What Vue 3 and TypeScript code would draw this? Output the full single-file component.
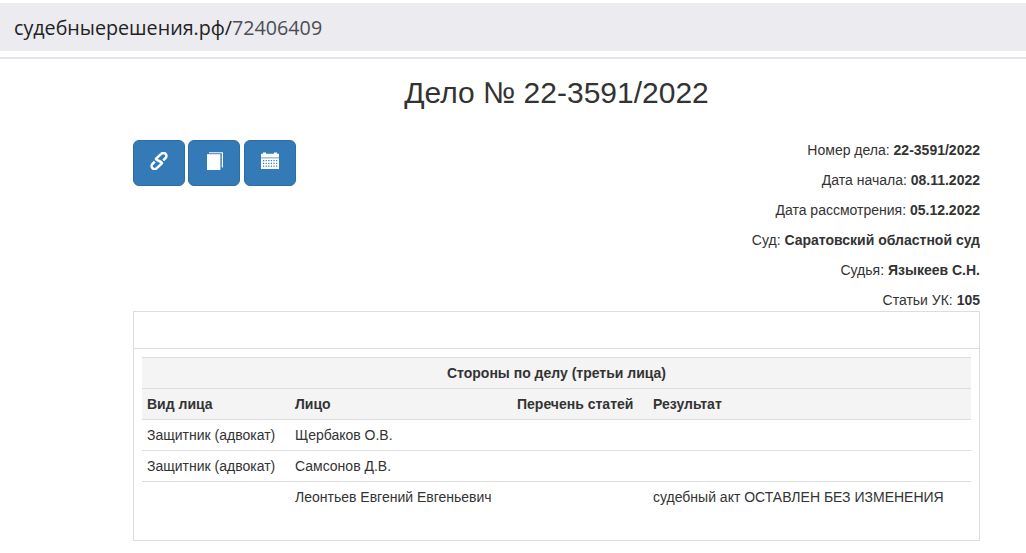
<script setup lang="ts">
const info: { label: string; value: string }[] = [
  { label: 'Номер дела:', value: '22-3591/2022' },
  { label: 'Дата начала:', value: '08.11.2022' },
  { label: 'Дата рассмотрения:', value: '05.12.2022' },
  { label: 'Суд:', value: 'Саратовский областной суд' },
  { label: 'Судья:', value: 'Языкеев С.Н.' },
  { label: 'Статьи УК:', value: '105' },
]
const rows: string[][] = [
  ['Защитник (адвокат)', 'Щербаков О.В.', '', ''],
  ['Защитник (адвокат)', 'Самсонов Д.В.', '', ''],
  ['', 'Леонтьев Евгений Евгеньевич', '', 'судебный акт ОСТАВЛЕН БЕЗ ИЗМЕНЕНИЯ'],
]
</script>

<template>
  <div class="page">
    <header class="address">
      <span class="domain">судебныерешения.рф/</span><span class="num">72406409</span>
    </header>
    <div class="rule"></div>
    <main class="container">
      <h1 class="title">Дело № 22-3591/2022</h1>
      <div class="top">
        <div class="buttons">
          <button class="btn" type="button" aria-label="Ссылка">
            <svg width="18" height="18" viewBox="0 0 18 18" fill="none" stroke="#fff" stroke-width="2.5" stroke-linecap="butt" stroke-linejoin="round">
              <path d="M13.2 8.4 15.6 6A3 3 0 0 0 11.2 1.9L6.1 6.6C4.8 8 13.2 10 11.9 11.4L6.8 16.1A3 3 0 0 1 2.4 12L4.8 9.6" />
            </svg>
          </button>
          <button class="btn" type="button" aria-label="Документы">
            <svg width="18" height="18" viewBox="0 0 18 18" fill="#fff">
              <path d="M2 2.2h13.4V18H2z" />
              <path d="M4 .3h14v15.2h-1.2V1.3H4z" />
            </svg>
          </button>
          <button class="btn" type="button" aria-label="Календарь">
            <svg width="18" height="18" viewBox="0 0 18 18">
              <path fill="#fff" d="M0 1.8h2V.6h3v1.2h8V.6h3v1.2h2v3.6H0zM0 6.2h18V17H0z" />
              <g fill="#337ab7">
                <rect v-for="c in 18" :key="c" :x="2 + ((c - 1) % 6) * 2.6" :y="8 + Math.floor((c - 1) / 6) * 2.8" width="1.2" height="1.2" />
              </g>
            </svg>
          </button>
        </div>
        <div class="info">
          <p v-for="item in info" :key="item.label">{{ item.label }} <b>{{ item.value }}</b></p>
        </div>
      </div>
      <section class="panel">
        <div class="panel-head"></div>
        <div class="panel-body">
          <table>
            <colgroup>
              <col class="c1" /><col class="c2" /><col class="c3" /><col />
            </colgroup>
            <thead>
              <tr><th colspan="4" class="center">Стороны по делу (третьи лица)</th></tr>
              <tr><th>Вид лица</th><th>Лицо</th><th>Перечень статей</th><th>Результат</th></tr>
            </thead>
            <tbody>
              <tr v-for="(r, i) in rows" :key="i">
                <td v-for="(c, j) in r" :key="j">{{ c }}</td>
              </tr>
            </tbody>
          </table>
        </div>
      </section>
    </main>
  </div>
</template>

<style>
html, body { margin: 0; background: #fff; }
</style>

<style scoped>
.page {
  font-family: "Liberation Sans", Arial, sans-serif;
  font-size: 14px;
  line-height: 20px;
  color: #333;
  padding-top: 3px;
  height: 550px;
  overflow: hidden;
}
.address {
  height: 48px;
  background: #ebebf0;
  padding-left: 14px;
  font-family: "Open Sans", sans-serif;
  font-size: 19.7px;
  line-height: 50px;
  color: #222;
}
.num { color: #4d4d55; }
.rule { height: 2px; margin-top: 6px; background: #e4e4e8; }
.container { width: 847px; margin-left: 133px; }
.title {
  margin: 15px 0 0;
  font-size: 30px;
  line-height: 38px;
  font-weight: 400;
  text-align: center;
}
.top { display: flex; justify-content: space-between; margin-top: 28px; }
.buttons { display: flex; align-items: flex-start; }
.btn {
  width: 52px;
  height: 46px;
  padding: 0 0 4px;
  display: flex;
  align-items: center;
  justify-content: center;
  background: #337ab7;
  border: 1px solid #2e6da4;
  border-radius: 6px;
}
.btn + .btn { margin-left: 3px; }
.btn:last-child { margin-left: 4px; }
.info { text-align: right; }
.info p { margin: 0 0 10px; }
.info p:last-child { margin-bottom: 1px; }
.info b { font-weight: 700; }
.panel { border: 1px solid #ddd; box-sizing: border-box; height: 230px; }
.panel-head { height: 36px; border-bottom: 1px solid #ddd; }
.panel-body { padding: 8px; }
table { width: 100%; border-collapse: collapse; table-layout: fixed; }
.c1 { width: 148px; }
.c2 { width: 222px; }
.c3 { width: 136px; }
th, td { padding: 5px; height: 31px; box-sizing: border-box; text-align: left; border-top: 1px solid #ddd; vertical-align: top; }
th { background: #f4f4f4; font-weight: 700; border-bottom: 1px solid #ddd; }
th.center { text-align: center; }
</style>
